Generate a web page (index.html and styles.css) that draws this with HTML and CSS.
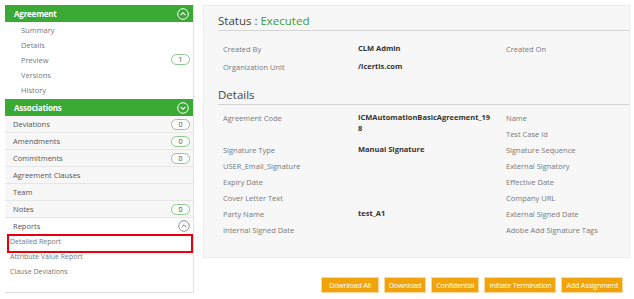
FILE: index.html
```html
<!DOCTYPE html>
<html lang="en">

<head>
  <meta charset="UTF-8">
  <title>Agreement</title>
  <link rel="stylesheet" href="styles.css">
</head>

<body>
  <div class="page">
    <div class="sidebar">
      <div class="group-header">
        <span>Agreement</span>
        <span class="toggle">
          <svg viewBox="0 0 12 12" width="12" height="12"><circle cx="6" cy="6" r="5.3" fill="none" stroke="#fff" stroke-width="1"/><path d="M3.6 7.2 L6 4.8 L8.4 7.2" fill="none" stroke="#fff" stroke-width="1.1"/></svg>
        </span>
      </div>
      <ul class="sub-list">
        <li>Summary</li>
        <li>Details</li>
        <li>Preview <span class="badge">1</span></li>
        <li>Versions</li>
        <li>History</li>
      </ul>
      <div class="group-header">
        <span>Associations</span>
        <span class="toggle">
          <svg viewBox="0 0 12 12" width="12" height="12"><circle cx="6" cy="6" r="5.3" fill="none" stroke="#fff" stroke-width="1"/><path d="M3.6 4.8 L6 7.2 L8.4 4.8" fill="none" stroke="#fff" stroke-width="1.1"/></svg>
        </span>
      </div>
      <ul class="row-list">
        <li>Deviations <span class="badge">0</span></li>
        <li>Amendments <span class="badge">0</span></li>
        <li>Commitments <span class="badge">0</span></li>
        <li>Agreement Clauses</li>
        <li>Team</li>
        <li>Notes <span class="badge">0</span></li>
        <li>Reports
          <span class="toggle">
            <svg viewBox="0 0 12 12" width="12" height="12"><circle cx="6" cy="6" r="5.3" fill="none" stroke="#888" stroke-width="0.9"/><path d="M3.6 7.2 L6 4.8 L8.4 7.2" fill="none" stroke="#777" stroke-width="1"/></svg>
          </span>
        </li>
      </ul>
      <ul class="report-list">
        <li class="selected">Detailed Report</li>
        <li>Attribute Value Report</li>
        <li>Clause Deviations</li>
      </ul>
    </div>

    <div class="content">
      <div class="panel">
        <h3 class="status">Status : <span class="executed">Executed</span></h3>
        <div class="fields top">
          <span class="label">Created By</span>
          <span class="value">CLM Admin</span>
          <span class="label">Created On</span>
          <span class="value"></span>
          <span class="label">Organization Unit</span>
          <span class="value">/icertis.com</span>
        </div>
        <h3 class="section">Details</h3>
        <div class="fields">
          <span class="label tall">Agreement Code</span>
          <span class="value tall">ICMAutomationBasicAgreement_198</span>
          <span class="label">Name</span>
          <span class="value"></span>
          <span class="label">Test Case Id</span>
          <span class="value"></span>
          <span class="label">Signature Type</span>
          <span class="value">Manual Signature</span>
          <span class="label">Signature Sequence</span>
          <span class="value"></span>
          <span class="label">USER_Email_Signature</span>
          <span class="value"></span>
          <span class="label">External Signatory</span>
          <span class="value"></span>
          <span class="label">Expiry Date</span>
          <span class="value"></span>
          <span class="label">Effective Date</span>
          <span class="value"></span>
          <span class="label">Cover Letter Text</span>
          <span class="value"></span>
          <span class="label">Company URL</span>
          <span class="value"></span>
          <span class="label">Party Name</span>
          <span class="value">test_A1</span>
          <span class="label">External Signed Date</span>
          <span class="value"></span>
          <span class="label">Internal Signed Date</span>
          <span class="value"></span>
          <span class="label">Adobe Add Signature Tags</span>
          <span class="value"></span>
        </div>
      </div>
      <div class="actions">
        <button class="btn wide">Download All</button>
        <button class="btn">Download</button>
        <button class="btn">Confidential</button>
        <button class="btn">Initiate Termination</button>
        <button class="btn">Add Assignment</button>
      </div>
    </div>
  </div>
</body>

</html>
```
FILE: styles.css
```css
body {
  margin: 0;
  background: #fff;
  font-family: "Open Sans", "Noto Sans", sans-serif;
  color: #333;
}

.page {
  display: flex;
  gap: 9px;
  padding: 5px 4px 0 5px;
}

/* sidebar */
.sidebar {
  width: 188px;
  flex-shrink: 0;
  border-right: 1px solid #e2e2e2;
  border-bottom: 1px solid #ddd;
  padding-bottom: 1px;
}

.group-header {
  display: flex;
  align-items: center;
  justify-content: space-between;
  height: 17px;
  padding: 0 4px 0 9px;
  background: #3aaa35;
  color: #fff;
  font-size: 8px;
  font-weight: bold;
  letter-spacing: -0.2px;
}

.toggle {
  display: flex;
}

.sidebar ul {
  list-style: none;
  margin: 0;
  padding: 0;
}

.sub-list {
  padding: 0 0 2px !important;
}

.sub-list li {
  display: flex;
  align-items: center;
  justify-content: space-between;
  height: 15px;
  padding: 0 3px 0 16px;
  font-size: 7.5px;
  color: #777;
}

.row-list li {
  display: flex;
  align-items: center;
  justify-content: space-between;
  height: 16px;
  padding: 0 3px 0 8px;
  font-size: 7.5px;
  color: #555;
  background: #f7f7f7;
  border-bottom: 1px solid #e6e6e6;
}

.row-list li:last-child {
  border-bottom: 0;
  background: #fff;
}

.badge {
  display: inline-block;
  min-width: 17px;
  height: 9px;
  line-height: 9px;
  border: 1px solid #8cc98a;
  border-radius: 6px;
  font-size: 7px;
  color: #444;
  text-align: center;
  background: #fff;
}

.report-list li {
  height: 15px;
  line-height: 15px;
  padding: 0 5px;
  font-size: 7px;
  color: #777;
}

/* red highlight drawn over the selected report */
.report-list li.selected {
  position: relative;
}

.report-list li.selected::after {
  content: "";
  position: absolute;
  top: 0;
  bottom: -4px;
  left: 2px;
  right: 0;
  border: 2px solid #e8000b;
}

/* content */
.content {
  flex: 1;
}

.panel {
  height: 253px;
  box-sizing: border-box;
  background: #f7f7f7;
  border: 1px solid #ececec;
  padding: 7px 0 0 14px;
}

.panel h3 {
  margin: 0;
  font-weight: normal;
  font-size: 11.5px;
  line-height: 15px;
  color: #444;
  border-bottom: 1px solid #d4d4d4;
  padding-bottom: 2px;
}

.executed {
  color: #3a9a3a;
}

.fields {
  display: grid;
  grid-template-columns: 135px 148px 120px 1fr;
  grid-auto-rows: 16px;
  padding: 5px 0 0 5px;
  font-size: 7.5px;
  align-items: start;
}

.fields.top {
  padding: 10px 0 10px 5px;
  grid-auto-rows: 18px;
}

.tall {
  grid-row: span 2;
}

.label {
  color: #777;
  line-height: 16px;
}

.value {
  color: #333;
  font-weight: bold;
  line-height: 11px;
  padding-top: 2px;
  max-width: 134px;
  word-break: break-all;
}

.actions {
  display: flex;
  justify-content: flex-end;
  gap: 5px;
  padding: 19px 7px 0 0;
}

.btn {
  height: 16px;
  padding: 0 4px;
  font-family: "Open Sans", sans-serif;
  font-size: 7.2px;
  letter-spacing: -0.2px;
  color: #fff;
  background: #f0a30a;
  border: 1px solid #fcd99a;
  cursor: pointer;
}

.btn.wide {
  padding: 0 7px;
}
```
